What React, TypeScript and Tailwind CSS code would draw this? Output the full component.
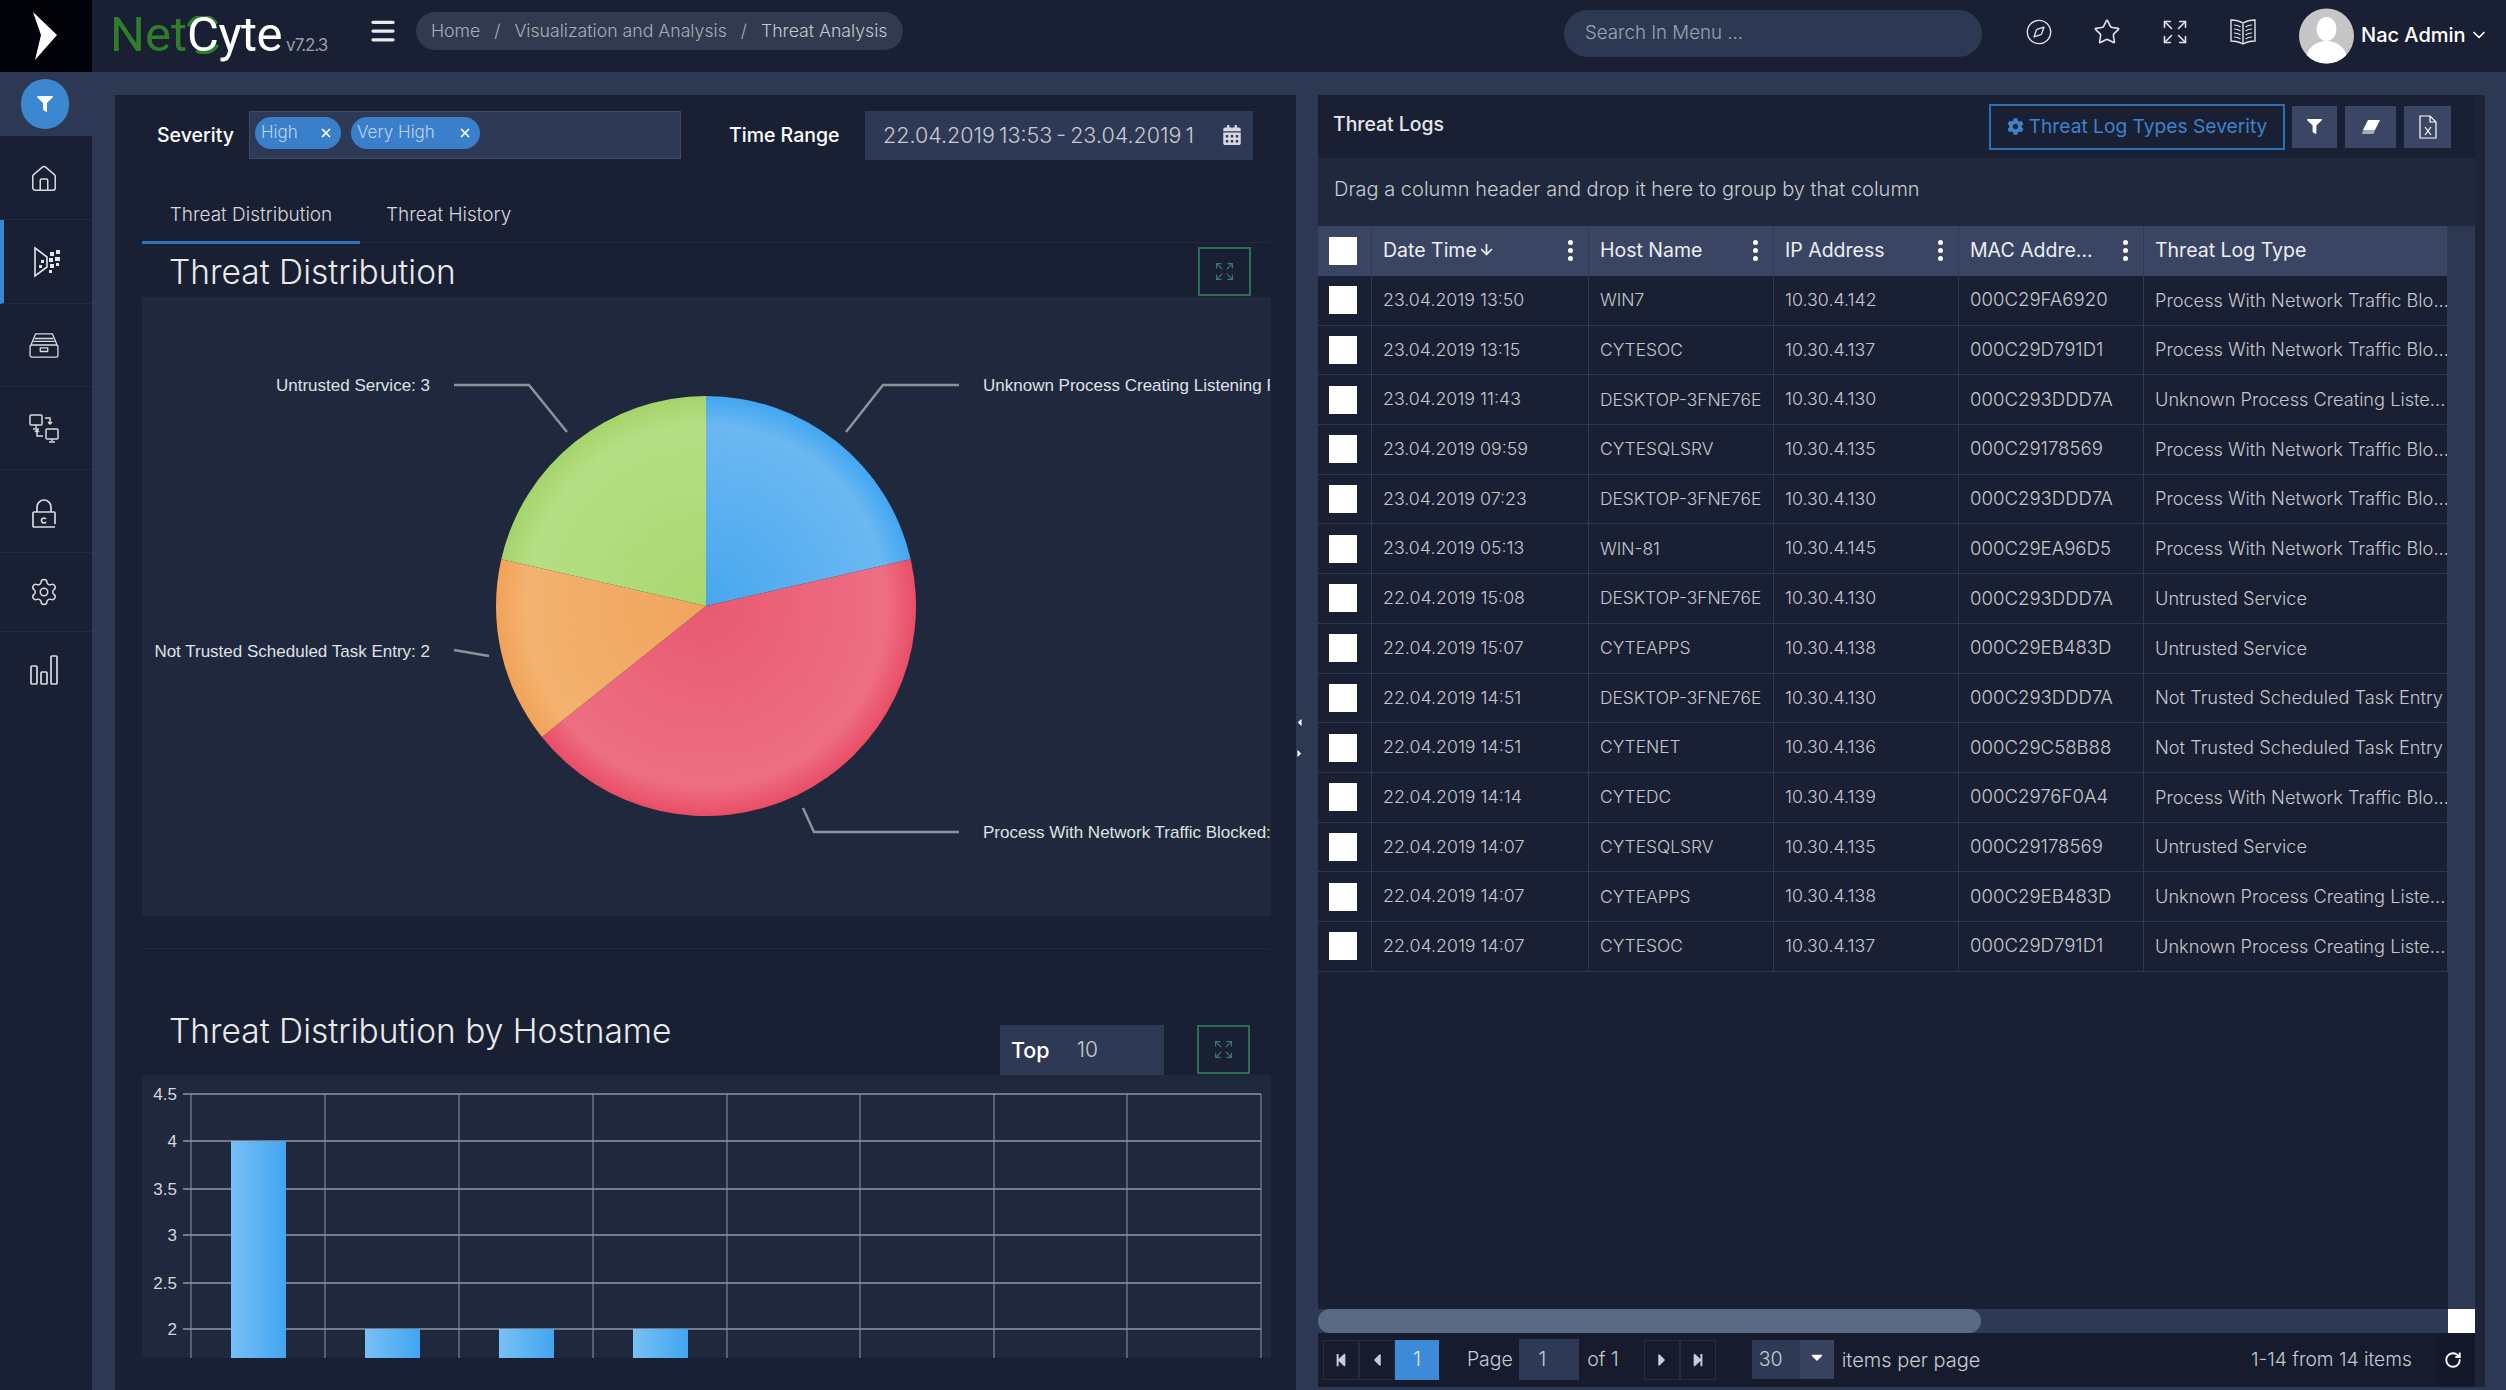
import React from "react";
import { Compass, Star, Expand, Home, Settings, ChevronDown, Menu, RotateCw, X, ArrowDown } from "lucide-react";
import { FaCalendarAlt, FaCog, FaFilter, FaCaretDown, FaStepBackward, FaStepForward, FaCaretLeft, FaCaretRight } from "react-icons/fa";

const P = "Process With Network Traffic Blo...";
const U = "Unknown Process Creating Liste...";
const T = "Untrusted Service";
const N = "Not Trusted Scheduled Task Entry";
const D = "DESKTOP-3FNE76E";
const rows: string[][] = [
  ["23.04.2019 13:50", "WIN7", "10.30.4.142", "000C29FA6920", P],
  ["23.04.2019 13:15", "CYTESOC", "10.30.4.137", "000C29D791D1", P],
  ["23.04.2019 11:43", D, "10.30.4.130", "000C293DDD7A", U],
  ["23.04.2019 09:59", "CYTESQLSRV", "10.30.4.135", "000C29178569", P],
  ["23.04.2019 07:23", D, "10.30.4.130", "000C293DDD7A", P],
  ["23.04.2019 05:13", "WIN-81", "10.30.4.145", "000C29EA96D5", P],
  ["22.04.2019 15:08", D, "10.30.4.130", "000C293DDD7A", T],
  ["22.04.2019 15:07", "CYTEAPPS", "10.30.4.138", "000C29EB483D", T],
  ["22.04.2019 14:51", D, "10.30.4.130", "000C293DDD7A", N],
  ["22.04.2019 14:51", "CYTENET", "10.30.4.136", "000C29C58B88", N],
  ["22.04.2019 14:14", "CYTEDC", "10.30.4.139", "000C2976F0A4", P],
  ["22.04.2019 14:07", "CYTESQLSRV", "10.30.4.135", "000C29178569", T],
  ["22.04.2019 14:07", "CYTEAPPS", "10.30.4.138", "000C29EB483D", U],
  ["22.04.2019 14:07", "CYTESOC", "10.30.4.137", "000C29D791D1", U],
];

const polar = (a: number, r = 210) => {
  const t = (a * Math.PI) / 180;
  return [706 + r * Math.sin(t), 605 - r * Math.cos(t)];
};
const slice = (a: number, b: number) => {
  const [x1, y1] = polar(a);
  const [x2, y2] = polar(b);
  return `M706 605 L${x1} ${y1} A210 210 0 ${b - a > 180 ? 1 : 0} 1 ${x2} ${y2} Z`;
};

function RadG({ id, edge, light, mid }: { id: string; edge: string; light: string; mid: string }) {
  return (
    <radialGradient id={id} gradientUnits="userSpaceOnUse" cx="706" cy="605" r="210">
      <stop offset="0" stopColor={mid} />
      <stop offset="0.86" stopColor={light} />
      <stop offset="1" stopColor={edge} />
    </radialGradient>
  );
}

function PieChart() {
  return (
    <svg width="1128" height="619" viewBox="142 296 1128 619" className="block">
      <defs>
        <RadG id="gb" edge="#42a6f0" light="#6bb8f2" mid="#47a7ee" />
        <RadG id="gr" edge="#e94e66" light="#ed6e83" mid="#e85a72" />
        <RadG id="go" edge="#f1a257" light="#f3b26f" mid="#f0a45c" />
        <RadG id="gg" edge="#a5d46a" light="#b6de84" mid="#aad770" />
      </defs>
      <path d={slice(0, 77.14)} fill="url(#gb)" />
      <path d={slice(77.14, 231.43)} fill="url(#gr)" />
      <path d={slice(231.43, 282.86)} fill="url(#go)" />
      <path d={slice(282.86, 360)} fill="url(#gg)" />
      <g fill="none" stroke="#8e929b" strokeWidth="2.5">
        <path d="M454 384 H529 L567 431" />
        <path d="M846 431 L883 384 H959" />
        <path d="M454 649 L489 655" />
        <path d="M803 807 L814 831 H959" />
      </g>
      <g fill="#dfe1e5" fontFamily="'Liberation Sans', sans-serif" fontSize="17">
        <text x="430" y="390" textAnchor="end">Untrusted Service: 3</text>
        <text x="983" y="390">Unknown Process Creating Listening Port: 3</text>
        <text x="430" y="656" textAnchor="end">Not Trusted Scheduled Task Entry: 2</text>
        <text x="983" y="837">Process With Network Traffic Blocked: 6</text>
      </g>
    </svg>
  );
}

function BarChart() {
  const vs = [191, 325, 459, 593, 727, 860, 994, 1127, 1261];
  const hs: [string, number][] = [["4.5", 1093], ["4", 1140], ["3.5", 1188], ["3", 1234], ["2.5", 1282], ["2", 1328]];
  const bars: [number, number][] = [[231, 1140], [365, 1328], [499, 1328], [633, 1328]];
  return (
    <svg width="1128" height="283" viewBox="142 1074 1128 283" className="block">
      <defs>
        <linearGradient id="bar" x1="0" x2="1" y1="0" y2="0">
          <stop offset="0" stopColor="#78c0f5" />
          <stop offset="1" stopColor="#42a5f0" />
        </linearGradient>
      </defs>
      {vs.map((x) => (
        <line key={x} x1={x} x2={x} y1={1093} y2={1357} stroke="#8e94a3" strokeWidth="1" />
      ))}
      {hs.map(([t, y]) => (
        <g key={t}>
          <line x1={183} x2={1261} y1={y} y2={y} stroke="#8e94a3" strokeWidth="1.5" />
          <text x="177" y={y + 6} textAnchor="end" fill="#d5d7dc" fontSize="17" fontFamily="'Liberation Sans', sans-serif">{t}</text>
        </g>
      ))}
      {bars.map(([x, y]) => (
        <rect key={x} x={x} y={y} width="55" height={1357 - y} fill="url(#bar)" />
      ))}
    </svg>
  );
}

function ExpandBtn() {
  return (
    <div className="w-[53px] h-[49px] border-2 border-[#2b6e57] flex items-center justify-center">
      <Expand size={21} strokeWidth={1.3} className="text-[#35806a]" />
    </div>
  );
}

const Sep = "border-b border-[#222a3e]";

function NavItem({ h, children, active }: { h: string; children: React.ReactNode; active?: boolean }) {
  return (
    <div className={`${h} ${Sep} flex items-center justify-center pr-[4px] text-[#d8dade] ${active ? "border-l-[4px] border-l-[#3b87d0]" : ""}`}>
      {children}
    </div>
  );
}

function TopIconBtn({ children, w }: { children: React.ReactNode; w: string }) {
  return <div className={`${w} h-[42px] bg-[#3a4663] flex items-center justify-center text-white`}>{children}</div>;
}

function PagerBtn({ children }: { children: React.ReactNode }) {
  return <div className="w-[37px] h-[40px] border border-[#252c40] flex items-center justify-center text-[#c9ccd3]">{children}</div>;
}

const cols = ["w-[217px]", "w-[185px]", "w-[185px]", "w-[185px]", "w-[304px]"];
const sizes = ["text-[17.8px]", "text-[17.4px]", "text-[17.8px]", "text-[18.6px]", "text-[18.2px]"];
const heads = ["Date Time", "Host Name", "IP Address", "MAC Addre...", "Threat Log Type"];

function Kebab() {
  return (
    <span className="absolute right-[15px] top-[14px] flex flex-col gap-[3px]">
      <i className="w-[5px] h-[5px] rounded-full bg-white block" />
      <i className="w-[5px] h-[5px] rounded-full bg-white block" />
      <i className="w-[5px] h-[5px] rounded-full bg-white block" />
    </span>
  );
}

export default function App() {
  return (
    <div className="w-screen h-screen flex overflow-hidden bg-[#2d3953] text-[18px] text-[#c8cad0] font-['Inter',sans-serif] font-light">
      {/* sidebar */}
      <aside className="w-[92px] shrink-0 flex flex-col bg-[#1a2033]">
        <div className="h-[72px] bg-[#020309] flex items-center justify-center pr-[2px]">
          <svg width="26" height="50" viewBox="0 0 26 50"><path d="M1 1 L25 24 L3 49 L9 24 Z" fill="#fff" /></svg>
        </div>
        <div className="h-[64px] bg-[#2d3953] flex items-center justify-center pr-[2px]">
          <div className="w-[48px] h-[50px] rounded-full bg-[#3b87d0] flex items-center justify-center">
            <FaFilter size={16} className="text-white" />
          </div>
        </div>
        <NavItem h="h-[84px] pt-[3px]"><Home size={30} strokeWidth={1.2} /></NavItem>
        <NavItem h="h-[84px] pl-[3px]" active>
          <svg width="30" height="34" viewBox="0 0 30 32" fill="none" stroke="#e3e5e9" strokeWidth="1.6">
            <path d="M2 2 L14 11 V21 L2 30 Z" />
            <g fill="#e3e5e9" stroke="none">
              <rect x="17" y="6" width="4" height="4" /><rect x="23" y="4" width="4" height="4" />
              <rect x="16" y="12" width="4" height="4" /><rect x="22" y="11" width="5" height="4" />
              <rect x="17" y="18" width="4" height="4" /><rect x="23" y="17" width="3" height="3" />
              <rect x="16" y="24" width="3" height="3" /><rect x="8" y="14" width="3" height="3" /><rect x="6" y="19" width="3" height="3" />
            </g>
          </svg>
        </NavItem>
        <NavItem h="h-[83px]">
          <svg width="30" height="26" viewBox="0 0 32 28" fill="none" stroke="#d8dade" strokeWidth="1.4" strokeLinejoin="round">
            <path d="M2 14 L7 2 H25 L30 14" /><path d="M6 7 H26 M4.5 10 H27.5" />
            <rect x="1" y="14" width="30" height="13" rx="2" /><rect x="12" y="17" width="8" height="4" />
          </svg>
        </NavItem>
        <NavItem h="h-[83px]">
          <svg width="30" height="29" viewBox="0 0 30 29" fill="none" stroke="#d8dade" strokeWidth="1.5">
            <rect x="1" y="1" width="12" height="10" rx="1" /><path d="M7 11 V14 M4 15 H10" />
            <rect x="17" y="15" width="12" height="10" rx="1" /><path d="M23 25 V27 M20 28 H26" />
            <path d="M16 4 H21 V10 M19 8 L21 10 L23 8" /><path d="M14 22 H8 V16 M6 18 L8 16 L10 18" />
          </svg>
        </NavItem>
        <NavItem h="h-[83px] pt-[5px]">
          <svg width="24" height="30" viewBox="0 0 24 30" fill="none" stroke="#d8dade" strokeWidth="1.7">
            <path d="M5 13 V8 A7 7 0 0 1 19 8 V13" /><path d="M23 28 H2 Q1 28 1 27 V14 Q1 13 2 13 H22 Q23 13 23 14 V25" />
            <path d="M14 20 A2.5 2.5 0 1 0 14 23" />
          </svg>
        </NavItem>
        <NavItem h="h-[79px]"><Settings size={30} strokeWidth={1.2} /></NavItem>
        <div className="h-[76px] flex items-center justify-center pr-[4px]">
          <svg width="28" height="30" viewBox="0 0 28 30" fill="none" stroke="#d8dade" strokeWidth="1.7">
            <rect x="1" y="11" width="6" height="18" rx="1" /><rect x="11" y="17" width="6" height="12" rx="1" /><rect x="21" y="1" width="6" height="28" rx="1" />
          </svg>
        </div>
      </aside>

      <div className="flex-1 min-w-0 flex flex-col">
        {/* header */}
        <header className="h-[72px] shrink-0 bg-[#1a2033] flex items-center relative">
          <div className="ml-[18px] -mt-[4px] w-[239px] flex items-baseline font-['Roboto',sans-serif] font-normal text-[49px] leading-none whitespace-nowrap">
            <span className="text-[#2f7f2a]">Net</span>
            <span className="text-white relative tracking-[-0.5px]">
              <svg width="36" height="38" viewBox="0 0 34 36" className="absolute left-[-3px] top-[6px]" fill="none">
                <path d="M5 10 A14 14 0 0 1 30 8" stroke="#2f7f2a" strokeWidth="5" />
                <path d="M31 27 A14 14 0 0 1 12 32" stroke="#2f7f2a" strokeWidth="5" />
              </svg>
              <span className="relative">Cyte</span>
            </span>
            <span className="text-[17px] tracking-[-1px] text-[#9a9ea8] ml-[4px] font-['Inter',sans-serif]">v7.2.3</span>
          </div>
          <Menu size={30} strokeWidth={2.6} className="text-[#e9eaec] ml-[19px] self-start mt-[16px]" />
          <nav className="ml-[18px] self-start mt-[12px] w-[487px] h-[38px] rounded-full bg-[#323a50] flex items-center pl-[15px] gap-[14px] text-[17.7px] text-[#a9adb7] whitespace-nowrap">
            <span>Home</span><span>/</span><span>Visualization and Analysis</span><span>/</span><span className="text-[#c4c7ce]">Threat Analysis</span>
          </nav>
          <div className="ml-[661px] self-start mt-[10px] w-[418px] h-[47px] rounded-full bg-[#2d3953] flex items-center pl-[21px] text-[18.7px] text-[#9ca1ad]">Search In Menu ...</div>
          <div className="ml-[43px] flex items-center gap-[40px] text-[#dfe1e5] -mt-[8px]">
            <Compass size={28} strokeWidth={1.2} />
            <Star size={28} strokeWidth={1.4} />
            <Expand size={28} strokeWidth={1.4} />
            <svg width="28" height="28" viewBox="0 0 28 28" fill="none" stroke="currentColor" strokeWidth="1.4">
              <path d="M14 5 Q9 2 2 2 V23 Q9 23 14 26 Q19 23 26 23 V2 Q19 2 14 5 Z M14 5 V26" />
              <path d="M5 7 Q9 7 11.5 9 M5 11 Q9 11 11.5 13 M5 15 Q9 15 11.5 17 M5 19 Q9 19 11.5 21 M23 7 Q19 7 16.5 9 M23 11 Q19 11 16.5 13 M23 15 Q19 15 16.5 17 M23 19 Q19 19 16.5 21" strokeWidth="1.1" />
            </svg>
          </div>
          <svg width="55" height="56" viewBox="0 0 55 56" className="ml-[42px] shrink-0">
            <defs><clipPath id="av"><circle cx="27.5" cy="28" r="27.5" /></clipPath></defs>
            <g clipPath="url(#av)">
              <rect width="55" height="56" fill="#c6c6c8" />
              <ellipse cx="27.5" cy="21" rx="10" ry="12" fill="#fff" />
              <ellipse cx="27.5" cy="50" rx="20" ry="17" fill="#fff" />
            </g>
          </svg>
          <span className="ml-[7px] -mt-[2px] text-[20px] font-medium text-white whitespace-nowrap">Nac Admin</span>
          <ChevronDown size={20} className="ml-[3px] -mt-[2px] text-white" />
        </header>

        {/* body */}
        <div className="flex-1 min-h-0 flex pl-[23px] pt-[23px]">
          {/* left panel */}
          <section className="w-[1181px] shrink-0 bg-[#1a2033] overflow-hidden">
            <div className="flex items-center mt-[16px] h-[48px]">
              <span className="ml-[42px] w-[92px] pt-[2px] text-[19.5px] font-medium text-white">Severity</span>
              <div className="w-[432px] h-[48px] bg-[#2e3a55] border border-[#3d4966] flex items-start pt-[5px] pl-[5px] gap-[10px] text-[17px] text-[#b9d4ef]">
                <span className="w-[86px] h-[32px] rounded-full bg-[#3a7fc9] flex items-center justify-between pl-[6px] pr-[8px]">High <X size={14} strokeWidth={3} className="text-white" /></span>
                <span className="w-[129px] h-[32px] rounded-full bg-[#3a7fc9] flex items-center justify-between pl-[6px] pr-[8px] whitespace-nowrap">Very High <X size={14} strokeWidth={3} className="text-white" /></span>
              </div>
              <span className="ml-[48px] w-[136px] pt-[2px] text-[19.5px] font-medium text-white whitespace-nowrap">Time Range</span>
              <div className="w-[388px] h-[49px] bg-[#2e3a55] flex items-center pl-[18px] text-[21.5px] overflow-hidden whitespace-nowrap">
                <span className="w-[312px] shrink-0 overflow-hidden [word-spacing:-2px]">22.04.2019 13:53 - 23.04.2019 13:53</span>
                <FaCalendarAlt size={20} className="ml-[27px] shrink-0 text-[#d5d7dc]" />
              </div>
            </div>

            <div className="ml-[27px] mr-[25px] mt-[17px] h-[67px] border-b border-[#222a3e] flex items-stretch text-[19px]">
              <div className="w-[218px] border-b-[3px] border-[#2f75bd] text-center pt-[25px] h-[68px] text-[#d5d7dc]">Threat Distribution</div>
              <div className="ml-[26px] pt-[25px] text-[#d5d7dc]">Threat History</div>
            </div>

            <div className="ml-[27px] mr-[25px] h-[54px] flex justify-between items-start">
              <h2 className="ml-[27px] mt-[2px] text-[33.5px] leading-[54px] font-light text-[#e9eaec]">Threat Distribution</h2>
              <div className="mt-[4px] mr-[20px]"><ExpandBtn /></div>
            </div>
            <div className="ml-[27px] mr-[25px] bg-[#20283d]"><PieChart /></div>
            <div className="ml-[27px] mr-[25px] mt-[32px] border-t border-[#222a3e]" />

            <div className="ml-[27px] mr-[25px] h-[126px] flex items-start pt-[76px]">
              <h2 className="ml-[27px] w-[831px] text-[33.5px] leading-[52px] -mt-[20px] font-light text-[#e9eaec] whitespace-nowrap">Threat Distribution by Hostname</h2>
              <div className="w-[164px] h-[50px] bg-[#2e3a55] flex items-center pl-[11px] gap-[27px]">
                <span className="font-medium text-white text-[21.5px]">Top</span><span className="text-[21px]">10</span>
              </div>
              <div className="ml-[33px]"><ExpandBtn /></div>
            </div>
            <div className="ml-[27px] mr-[25px] bg-[#20283d]"><BarChart /></div>
          </section>

          {/* divider with collapse arrows */}
          <div className="w-[22px] shrink-0 flex flex-col items-center pt-[622px] gap-[20px] pr-[16px] text-white">
            <FaCaretLeft size={11} />
            <FaCaretRight size={11} />
          </div>

          {/* right panel */}
          <section className="w-[1157px] shrink-0 h-[1292px] bg-[#1a2033] flex flex-col border-r-[10px] border-r-[#1d2438] box-content">
            <div className="h-[63px] shrink-0 flex items-center pl-[15px]">
              <span className="-mt-[4px] text-[19.4px] font-medium text-[#e4e6ea] w-[656px]">Threat Logs</span>
              <div className="w-[296px] h-[46px] border-2 border-[#2f6fb0] flex items-center justify-center gap-[5px] text-[#3f82c9] text-[19.2px] font-normal whitespace-nowrap"><FaCog size={17} />Threat Log Types Severity</div>
              <div className="ml-[7px] flex gap-[8px]">
                <TopIconBtn w="w-[45px]"><FaFilter size={15} /></TopIconBtn>
                <TopIconBtn w="w-[51px]">
                  <svg width="20" height="16" viewBox="0 0 20 16"><path d="M7 1 H19 L14 11 H2 Z" fill="#fff" /><path d="M2 11 H14 L12.5 15 H1 Z" fill="#fff" opacity="0.55" /></svg>
                </TopIconBtn>
                <TopIconBtn w="w-[47px]">
                  <svg width="18" height="24" viewBox="0 0 18 24" fill="none" stroke="#fff" strokeWidth="1.2"><path d="M1 1 H11 L17 7 V23 H1 Z M11 1 V7 H17" /><path d="M6 12 L12 20 M12 12 L6 20" /></svg>
                </TopIconBtn>
              </div>
            </div>
            <div className="h-[68px] shrink-0 bg-[#20283d] flex items-center pl-[16px] pb-[6px] text-[20px] text-[#c8cad0]">Drag a column header and drop it here to group by that column</div>

            <div className="flex-1 min-h-0 flex">
              <div className="w-[1130px] shrink-0">
                <div className="h-[50px] bg-[#394562] flex text-[#eceef1] whitespace-nowrap">
                  <div className="w-[54px] border-r border-[#2f3a55] flex items-center justify-center pr-[4px]"><i className="w-[28px] h-[28px] bg-white block" /></div>
                  {heads.map((h, i) => (
                    <div key={h} className={`${cols[i]} relative border-r border-[#2f3a55] pl-[11px] flex items-center font-normal text-[19.5px] overflow-hidden`}>
                      {h}
                      {i === 0 && <ArrowDown size={17} strokeWidth={2.4} className="ml-[1px] -mt-[3px]" />}
                      {i < 4 && <Kebab />}
                    </div>
                  ))}
                </div>
                {rows.map((r, n) => (
                  <div key={n} className="h-[49.7px] flex border-b border-[#2c3852] whitespace-nowrap">
                    <div className="w-[54px] border-r border-[#2c3852] flex items-center justify-center pr-[4px]"><i className="w-[28px] h-[28px] bg-white block" /></div>
                    {r.map((c, i) => (
                      <div key={i} className={`${cols[i]} ${sizes[i]} border-r border-[#2c3852] pl-[11px] flex items-center text-[#c5c7cd] overflow-hidden`}>{c}</div>
                    ))}
                  </div>
                ))}
              </div>
              <div className="flex-1 bg-[#2d3953]" />
            </div>

            <div className="h-[24px] shrink-0 flex bg-[#2e3a55]">
              <div className="w-[663px] rounded-full bg-[#5a6a85]" />
              <div className="flex-1" />
              <div className="w-[27px] bg-white" />
            </div>

            <div className="h-[54px] shrink-0 bg-[#161c2e] flex items-center pl-[5px] pb-[1px] text-[19.5px] text-[#c8cad0] whitespace-nowrap">
              <PagerBtn><FaStepBackward size={14} /></PagerBtn>
              <PagerBtn><FaCaretLeft size={20} /></PagerBtn>
              <div className="w-[45px] h-[40px] bg-[#3c8ad8] flex items-center justify-center text-[#dbe9f7]">1</div>
              <span className="ml-[28px] w-[54px]">Page</span>
              <div className="w-[61px] h-[41px] bg-[#2e3a55] flex items-center pl-[19px]">1</div>
              <span className="ml-[8px] w-[58px]">of 1</span>
              <PagerBtn><FaCaretRight size={20} /></PagerBtn>
              <PagerBtn><FaStepForward size={14} /></PagerBtn>
              <div className="ml-[36px] w-[49px] h-[39px] bg-[#2e3a55] flex items-center pl-[7px]">30</div>
              <div className="w-[35px] h-[39px] bg-[#38445f] flex items-center justify-center"><FaCaretDown size={18} className="text-white -mt-[6px]" /></div>
              <span className="ml-[8px] w-[400px] text-[20px]">items per page</span>
              <span className="w-[186px] text-right text-[19.2px]">1-14 from 14 items</span>
              <div className="ml-[27px] w-[37px] h-[50px] bg-[#12172a] flex items-center justify-start pl-[5px] text-white"><RotateCw size={18} strokeWidth={2.4} /></div>
            </div>
          </section>
        </div>
      </div>
    </div>
  );
}
